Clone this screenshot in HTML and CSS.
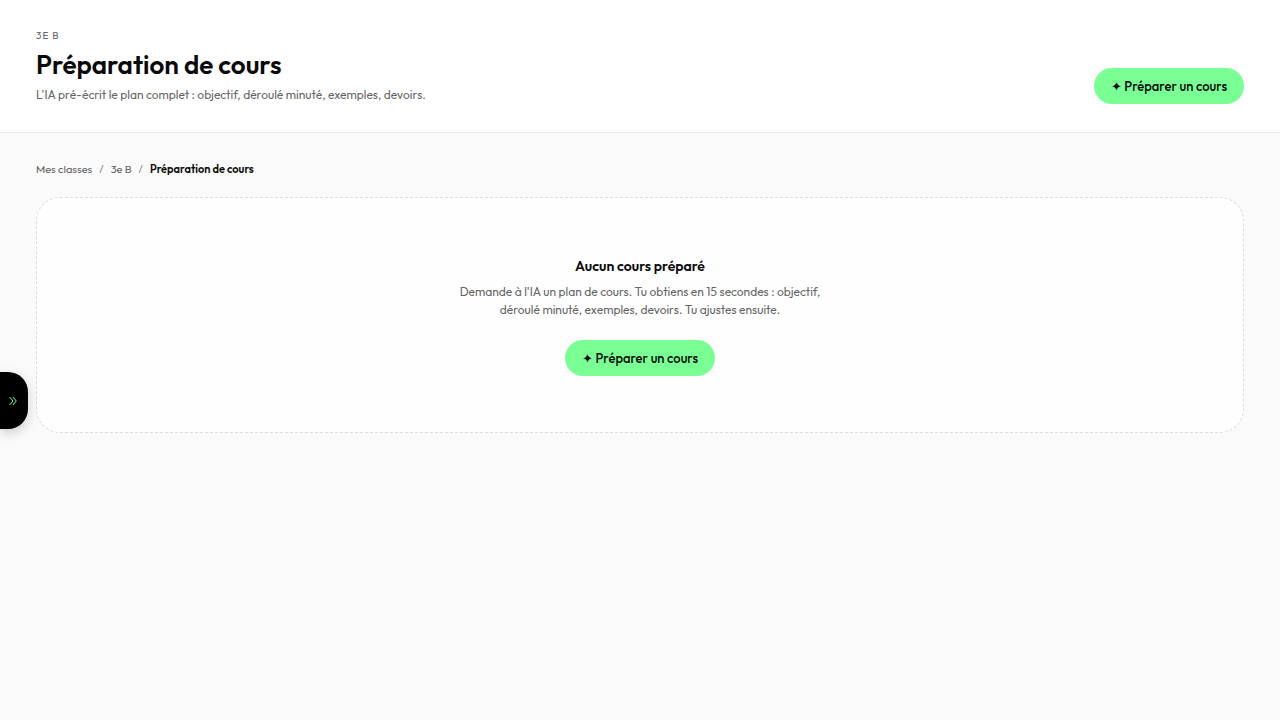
FILE: index.html
```
<!DOCTYPE html>
<html lang="fr">
<head>
<meta charset="UTF-8">
<meta name="viewport" content="width=device-width, initial-scale=1.0">
<title>Préparation de cours</title>
<link rel="stylesheet" href="styles.css">
</head>
<body>

<header class="page-header">
  <div class="page-heading">
    <p class="eyebrow">3e B</p>
    <h1>Préparation de cours</h1>
    <p class="subtitle">L'IA pré-écrit le plan complet : objectif, déroulé minuté, exemples, devoirs.</p>
  </div>
  <button type="button" class="btn">✦ Préparer un cours</button>
</header>

<main class="content">
  <nav class="breadcrumb" aria-label="Fil d'Ariane">
    <a href="#classes">Mes classes</a>
    <span class="separator">/</span>
    <a href="#3eb">3e B</a>
    <span class="separator">/</span>
    <span class="current">Préparation de cours</span>
  </nav>

  <section class="empty-state">
    <h2>Aucun cours préparé</h2>
    <p>Demande à l'IA un plan de cours. Tu obtiens en 15 secondes : objectif, déroulé minuté, exemples, devoirs. Tu ajustes ensuite.</p>
    <button type="button" class="btn">✦ Préparer un cours</button>
  </section>
</main>

<button type="button" class="menu-toggle" aria-label="Ouvrir le menu">
  <svg width="10" height="10" viewBox="0 0 10 10" fill="none" stroke="currentColor" stroke-width="1">
    <path d="M1.5 1 L5 5 L1.5 9"/>
    <path d="M4.8 1 L8.3 5 L4.8 9"/>
  </svg>
</button>

</body>
</html>
```

FILE: styles.css
```
* {
  box-sizing: border-box;
}
body {
  font-family: Outfit, Lato, sans-serif;
  margin: 0;
  background-color: #fafafa;
  color: #0a0a0a;
}
h1, h2, p {
  margin: 0;
}
.page-header {
  display: flex;
  justify-content: space-between;
  align-items: flex-end;
  gap: 24px;
  padding: 28px 36px;
  background-color: #fff;
  border-bottom: 1px solid #ebebeb;
}
.eyebrow {
  font-size: 10px;
  line-height: 16px;
  letter-spacing: 1px;
  text-transform: uppercase;
  color: #666;
}
h1 {
  margin-top: 5px;
  font-size: 26px;
  line-height: 32px;
  font-weight: 600;
}
.subtitle {
  margin-top: 5px;
  font-size: 12px;
  line-height: 18px;
  color: #666;
}
.btn {
  flex-shrink: 0;
  height: 36px;
  padding: 0 17px;
  border: none;
  border-radius: 18px;
  background-color: #7aff94;
  color: #0a0a0a;
  font-family: inherit;
  font-size: 13px;
  font-weight: 500;
  cursor: pointer;
}
.content {
  padding: 28px 36px;
}
.breadcrumb {
  display: flex;
  gap: 7px;
  margin-bottom: 20px;
  font-size: 11px;
  line-height: 16px;
  color: #666;
}
.breadcrumb a {
  color: inherit;
  text-decoration: none;
}
.separator {
  color: #888;
}
.current {
  color: #0a0a0a;
  font-weight: 600;
}
.empty-state {
  display: flex;
  flex-direction: column;
  align-items: center;
  padding: 56px 24px;
  border: 1px dashed #dcdcdc;
  border-radius: 24px;
  background-color: #fefefe;
  text-align: center;
}
.empty-state h2 {
  font-size: 14px;
  line-height: 24px;
  font-weight: 600;
}
.empty-state p {
  max-width: 380px;
  margin: 5px 0 21px;
  font-size: 12px;
  line-height: 18px;
  color: #666;
}
.menu-toggle {
  position: fixed;
  top: 372px;
  left: 0;
  display: flex;
  align-items: center;
  justify-content: flex-end;
  width: 28px;
  height: 57px;
  padding: 0 10px 0 0;
  border: none;
  border-radius: 0 20px 20px 0;
  background-color: #000;
  color: #7aff94;
  box-shadow: 0 4px 12px rgba(0, 0, 0, 0.18);
  cursor: pointer;
}
```
